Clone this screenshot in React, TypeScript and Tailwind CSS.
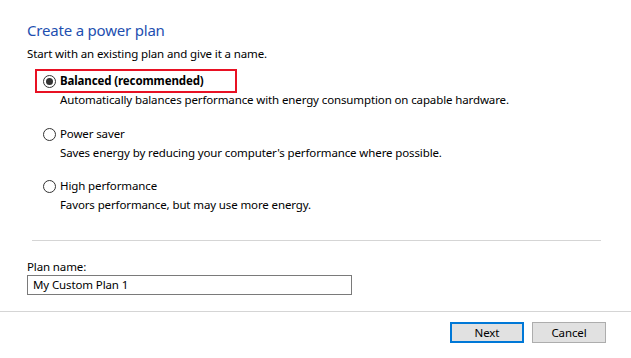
import React from "react";

type Plan = {
  id: string;
  label: string;
  description: string;
};

const plans: Plan[] = [
  {
    id: "balanced",
    label: "Balanced (recommended)",
    description: "Automatically balances performance with energy consumption on capable hardware.",
  },
  {
    id: "saver",
    label: "Power saver",
    description: "Saves energy by reducing your computer's performance where possible.",
  },
  {
    id: "high",
    label: "High performance",
    description: "Favors performance, but may use more energy.",
  },
];

function Radio({ checked }: { checked: boolean }) {
  return (
    <span className="flex h-[13px] w-[13px] shrink-0 items-center justify-center rounded-full border border-[#333333] bg-white">
      {checked ? <span className="h-[7px] w-[7px] rounded-full bg-[#333333]" /> : null}
    </span>
  );
}

export default function App() {
  const selected = "balanced";

  return (
    <div
      className="flex h-[358px] w-[631px] flex-col bg-white text-[11.5px] leading-[16px] tracking-[-0.12px] text-black"
      style={{ fontFamily: '"Noto Sans", "Open Sans", sans-serif' }}
    >
      <div className="flex flex-col px-[27px] pt-[20px]">
        <h1 className="text-[15px] leading-[20px] font-normal tracking-[-0.2px] text-[#1e4fb0]">Create a power plan</h1>
        <p className="mt-[6px]">Start with an existing plan and give it a name.</p>

        <div className="mt-[7px] flex flex-col">
          {plans.map((plan, i) => {
            const isSelected = plan.id === selected;
            return (
              <div key={plan.id} className={i === 0 ? "" : i === 1 ? "mt-[18px]" : "mt-[17px]"}>
                {isSelected ? (
                  <div className="ml-[8px] flex w-[202px] items-center gap-[4px] border-2 border-[#e81123] py-[2px] pl-[6px]">
                    <Radio checked />
                    <span className="font-bold">{plan.label}</span>
                  </div>
                ) : (
                  <div className="ml-[16px] flex items-center gap-[4px]">
                    <Radio checked={false} />
                    <span>{plan.label}</span>
                  </div>
                )}
                <p className={isSelected ? "-mt-[1px] ml-[33px]" : "mt-[3px] ml-[33px]"}>{plan.description}</p>
              </div>
            );
          })}
        </div>

        <div className="mt-[27px] ml-[5px] mr-[3px] h-px bg-[#d5d5d5]" />

        <label className="mt-[18px]">Plan name:</label>
        <div className="flex h-[20px] w-[325px] items-center border border-[#7a7a7a] px-[5px]">
          My Custom Plan 1
        </div>
      </div>

      <div className="mt-[16px] h-px w-full bg-[#d5d5d5]" />

      <div className="mt-[10px] flex justify-end gap-[8px] pr-[25px]">
        <button
          type="button"
          className="h-[21px] w-[74px] border-2 border-[#0078d7] bg-[#e1e1e1] leading-[16px]"
        >
          Next
        </button>
        <button
          type="button"
          className="h-[21px] w-[74px] border border-[#adadad] bg-[#e1e1e1] leading-[16px]"
        >
          Cancel
        </button>
      </div>
    </div>
  );
}
